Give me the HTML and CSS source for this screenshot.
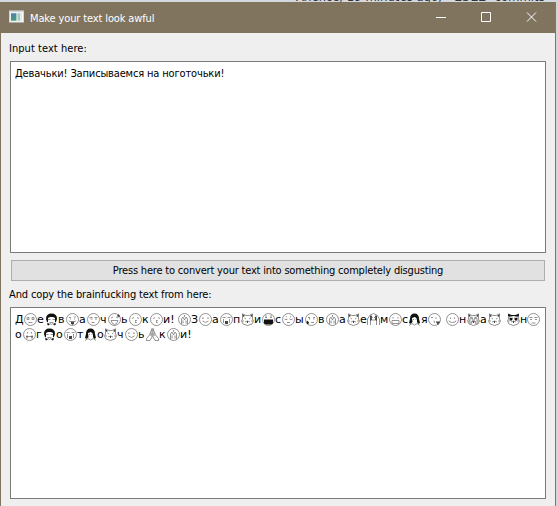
FILE: index.html
```
<!DOCTYPE html>
<html lang="en">
<head>
<meta charset="utf-8">
<title>Make your text look awful</title>
<link rel="stylesheet" href="styles.css">
</head>
<body>
<svg class="defs" aria-hidden="true">
  <symbol id="plain" viewBox="0 0 13 13"><circle cx="6.5" cy="6.5" r="6"/><path d="M3 4.500h2v2H3zM8 4.500h2v2H8zM4.500 9.500h4"/></symbol>
  <symbol id="smile" viewBox="0 0 13 13"><circle cx="6.5" cy="6.5" r="6"/><path d="M3 5.500q1-1.500 2 0M8 5.500q1-1.500 2 0M3.500 8q3 3 6 0"/></symbol>
  <symbol id="dots" viewBox="0 0 13 13"><circle cx="6.5" cy="6.5" r="6"/><path d="M4.500 4.500v1.500M8.500 4.500v1.500M3 7.500q0 2 3.500 2t3.500-2"/></symbol>
  <symbol id="think" viewBox="0 0 13 13"><circle cx="6.5" cy="6.5" r="6"/><path d="M2.500 4.500h3M7.500 4.500h3M3.500 6h2M8 6h2M4.500 9.500h3"/></symbol>
  <symbol id="relief" viewBox="0 0 13 13"><circle cx="6.5" cy="6.5" r="6"/><path d="M2.500 6q1.500 1.500 3 0M7.500 6q1.500 1.500 3 0M5 9.500h3M4 4l1-.5M8 3.500l1 .5"/></symbol>
  <symbol id="kiss" viewBox="0 0 13 13"><circle cx="6.5" cy="6.5" r="6"/><path d="M3 5.500l2-1M8 4.500l2 1M6 7.500h1.500l-1 1 1 1H6"/></symbol>
  <symbol id="wink" viewBox="0 0 13 13"><circle cx="6.5" cy="6.5" r="6"/><path d="M3 4.500h2M8 4.500v1.500M5.500 8q2 .3 1 2"/><path class="ink" d="M8 9l1-1 1 1 1-1 1 1-2 3z"/></symbol>
  <symbol id="tongue" viewBox="0 0 13 13"><circle cx="6.5" cy="6.5" r="6"/><path d="M3 4.500h2M8 4h2M4 6h1M8 6h1M3 8q3.500 2 7 0"/><path class="ink" d="M5 8.500h3v2l-1.500 1.500L5 10.500z"/></symbol>
  <symbol id="grin" viewBox="0 0 13 13"><circle cx="6.5" cy="6.5" r="6"/><path d="M3 5l2-1M8 4l2 1M3 7.500h7q-1 4-3.500 4T3 7.500"/><path class="ink" d="M9 3l1.500-2 1.500 2-1 1.500z"/></symbol>
  <symbol id="mask" viewBox="0 0 13 13"><circle cx="6.5" cy="6.5" r="6"/><path d="M3 4.500h2M8 4.500h2M3 3h2M8 3h2"/><path class="black" d="M2 6.500h9v4l-2 1H4l-2-1z"/></symbol>
  <symbol id="teeth" viewBox="0 0 13 13"><circle cx="6.5" cy="6.5" r="6"/><path d="M4 4v1.500M9 4v1.500M3 7.500h7v3H3z"/></symbol>
  <symbol id="zipper" viewBox="0 0 13 13"><circle cx="6.5" cy="6.5" r="6"/><path d="M4.500 4v1.500M8.500 4v1.500M3 8.500h7"/><path class="ink" d="M3.500 7.500h1v3h-1zM8.500 7.500h1v3h-1z"/></symbol>
  <symbol id="eyebrow" viewBox="0 0 13 13"><circle cx="6.5" cy="6.5" r="6"/><path d="M3 4.500h2M8 4.500h2M4.500 5v1.500M9 5v1.500M6 9.500h3"/><path class="black" d="M2 7.500L4 9.500 3 11.500 1.500 10z"/></symbol>
  <symbol id="cry" viewBox="0 0 13 13"><circle cx="6.5" cy="6.5" r="6"/><path d="M2.500 4.500h3M7.500 4.500h3M3.500 6v4M9.500 6v4"/><path class="ink" d="M5 8h3v3H5z"/></symbol>
  <symbol id="monkey" viewBox="0 0 13 13"><circle cx="6.5" cy="6.5" r="6"/><path d="M3.500 11V6L5 4l1.500 3L8 4l1.500 2v5M6.500 2v2M5 7.500v3M8 7.500v3"/></symbol>
  <symbol id="cat" viewBox="0 0 13 13"><path d="M1.500 6V.8L5 2.500h3L11.500.8V6l1 2-1.500 3-4.500 1.500L2 11 .5 8zM3.500 5l1.500 1M9.500 5L8 6M4 9l2.500-1L9 9M1 8h2M10 8h2"/><path class="ink" d="M1.500 1l2.500 2-2 1zM11.500 1L9 3l2 1zM6 8h1v2H6z"/></symbol>
  <symbol id="darkcat" viewBox="0 0 13 13"><use href="#cat"/><path class="black" d="M1 1l3 1h5l3-1v2L9 3.500 6.500 3 4 3.500 1 3zM2.500 4.500L4 5l1.500-.5v2L4 8 2.500 6.500zM7.500 4.500L9 5l1.500-.5v2L9 8 7.500 6.500z"/></symbol>
  <symbol id="busycat" viewBox="0 0 13 13"><use href="#cat"/><path d="M3 11V5l2-1 1 3-2 4M10 11V5L8 4 7 7l2 4"/></symbol>
  <symbol id="woman" viewBox="0 0 13 13"><path class="black" d="M2 6Q2 .5 6.500.5T11 6l1 4-2 1H3L1 10z"/><path class="face" d="M4 5l3-1 2 2v3l1 1.500 2 2H1l2-2L4.500 9z"/><path d="M1 12.500l3-2 2.500 1.500L9 10.500l3 2M5 6.500h1M7.500 6.500h1"/></symbol>
  <symbol id="man" viewBox="0 0 13 13"><path class="black" d="M1 6Q1 .5 6.500.5T12 6l-1 3H2z"/><path class="face" d="M3 5l2-1h3l2 1v4l-1.500 3h-4L3 9z"/><path d="M3 6.500h2.500M7.500 6.500H10M5 9.500h3M2 12l2.500-2 2 1.500L8.500 10l2.500 2"/><path class="black" d="M2 9.500l3 2-2 1zM11 9.500l-3 2 2 1z"/></symbol>
  <symbol id="eyes" viewBox="0 0 13 13"><circle cx="6.5" cy="6.5" r="6"/><path d="M2.500 4.500h3M7.500 4.500h3M3 6.500h2M8 6.500h2M4.500 10h4"/></symbol>
  <symbol id="raised" viewBox="0 0 13 13"><path d="M.5 12V6q2-5 6-5.500 4 .5 6 5.500v6M3.500 12V8L4 3l2 2M9.500 12V8L9 3 7 5M5 7h3"/><path class="ink" d="M3 3l1.500-1 .5 5-2 1zM10 3L8.500 2 8 7l2 1z"/></symbol>
  <symbol id="pray" viewBox="0 0 13 13"><path d="M6 .5L3.500 7 .5 10.500v2H4L6 9zM7 .5L9.500 7l3 3.500v2H9L7 9zM5 5v3M8 5v3"/></symbol>
</svg>

<div class="behind"><span>Алексе, 19 minutes ago,</span><b>1512</b><span>commits</span></div>
<main class="window">
  <header class="titlebar">
    <svg class="appicon" viewBox="0 0 16 13">
      <defs><linearGradient id="pane" x2="1" y2="1"><stop stop-color="#527cba"/><stop offset="1" stop-color="#43a367"/></linearGradient></defs>
      <path fill="#d1d5d7" d="M0 0h16v13H0z"/><path fill="#fff" d="M1 2h14v10H1z"/><path fill="url(#pane)" d="M2 3h6v8H2z"/><path fill="#a8c6c4" d="M9 3h3v8H9z"/><path fill="#dce8e5" d="M12 3h2v8h-2z"/>
    </svg>
    <h1>Make your text look awful</h1>
    <svg class="control" viewBox="0 0 45 31"><path d="M17 15.500h10"/></svg>
    <svg class="control" viewBox="0 0 45 31"><path d="M17.500 10.500h9v9h-9z"/></svg>
    <svg class="control close" viewBox="0 0 45 31"><path d="M18 10.500l9 9M27 10.500l-9 9"/></svg>
  </header>
  <section class="content">
    <label class="l-in">Input text here:</label>
    <div class="box input"><span>Девачьки! Записываемся на ноготочьки!</span></div>
    <button><span>Press here to convert your text into something completely disgusting</span></button>
    <label class="l-out">And copy the brainfucking text from here:</label>
    <div class="box output" id="output"></div>
  </section>
</main>
<script src="output.js"></script>
</body>
</html>
```
FILE: styles.css
```
* { box-sizing: border-box; }
body {
  margin: 0;
  width: 557px;
  height: 506px;
  overflow: hidden;
  background: #d3d8df;
  font: 11px/15px "DejaVu Sans Condensed", "DejaVu Sans", sans-serif;
  font-stretch: condensed;
  color: #000;
}
.defs { display: none; }
.behind {
  display: flex;
  align-items: flex-end;
  gap: 12px;
  height: 2px;
  overflow: hidden;
  padding-left: 296px;
  font-size: 13px;
  line-height: 10px;
  white-space: nowrap;
  color: #333;
}
.behind b + span { margin-left: -4px; }
.window {
  width: 556px;
  height: 504px;
  border-left: 1px solid #807560;
  border-right: 1px solid #807560;
  background: #efefef;
}
.titlebar {
  display: flex;
  align-items: center;
  height: 31px;
  padding: 0 1px 0 8px;
  background: #80745f;
  color: #fff;
}
.appicon { width: 15px; height: 13px; margin-top: -2px; }
.titlebar h1 {
  flex: 1;
  margin: 1px 0 0 6px;
  font-size: 11px;
  font-weight: normal;
  letter-spacing: -.13px;
}
.control { width: 45px; height: 31px; fill: none; stroke: #fff; stroke-width: 1; }
.content { display: flex; flex-direction: column; padding: 8px 9px 0 9px; }
label { height: 15px; margin-left: -1px; white-space: nowrap; }
.l-in { margin-bottom: 5px; letter-spacing: .05px; }
.l-out { margin: 6px 0 5px -1px; letter-spacing: -.13px; }
.box { border: 1px solid #7a7a7a; background: #fff; }
.input { height: 192px; padding: 4px 4px; letter-spacing: -.15px; }
button {
  height: 21px;
  margin: 7px 1px 0 1px;
  padding: 0;
  border: 1px solid #adadad;
  background: #e1e1e1;
  color: #000;
  font: inherit;
  letter-spacing: -.19px;
}
.output { height: 192px; padding: 4px 4px; font-family: "DejaVu Sans", sans-serif; font-stretch: normal; }
.row { display: flex; align-items: center; height: 15px; }
.row span { flex: none; white-space: pre; }
.emoji { flex: none; width: 13px; height: 13px; fill: none; stroke: #777; stroke-width: .8; }
.ink { fill: #444; stroke: none; }
.black { fill: #111; stroke: none; }
.face { fill: #fff; stroke: none; }
```
FILE: output.js
```
// Each entry: letters, width of their cell in pixels, emoji that follows.
const rows = [
  [["Д",9,"plain"],["е",8,"man"],["в",8,"tongue"],["а",8,"think"],["ч",8,"grin"],["ь",8,"kiss"],["к",8,"kiss"],["и!",15,"monkey"],["З",8,"smile"],["а",8,"cry"],["п",8,"cat"],["и",8,"mask"],["с",7,"relief"],["ы",10,"eyebrow"],["в",8,"monkey"],["а",8,"cat"],["е",7,"raised"],["м",9,"teeth"],["с",6,"woman"],["я",7,"wink"],["",5,"dots"],["н",8,"busycat"],["а",8,"cat"],["",6,"darkcat"],["н",7,"eyes"]],
  [["о",8,"zipper"],["г",7,"man"],["о",8,"cry"],["т",7,"woman"],["о",7,"cat"],["ч",8,"smile"],["ь",8,"pray"],["к",8,"monkey"],["и!",15,null]]
];
document.getElementById("output").innerHTML = rows.map(row =>
  `<div class="row">${row.map(([text, width, icon]) =>
    `<span style="width:${width}px">${text}</span>` +
    (icon ? `<svg class="emoji"><use href="#${icon}"/></svg>` : "")
  ).join("")}</div>`).join("");
```
